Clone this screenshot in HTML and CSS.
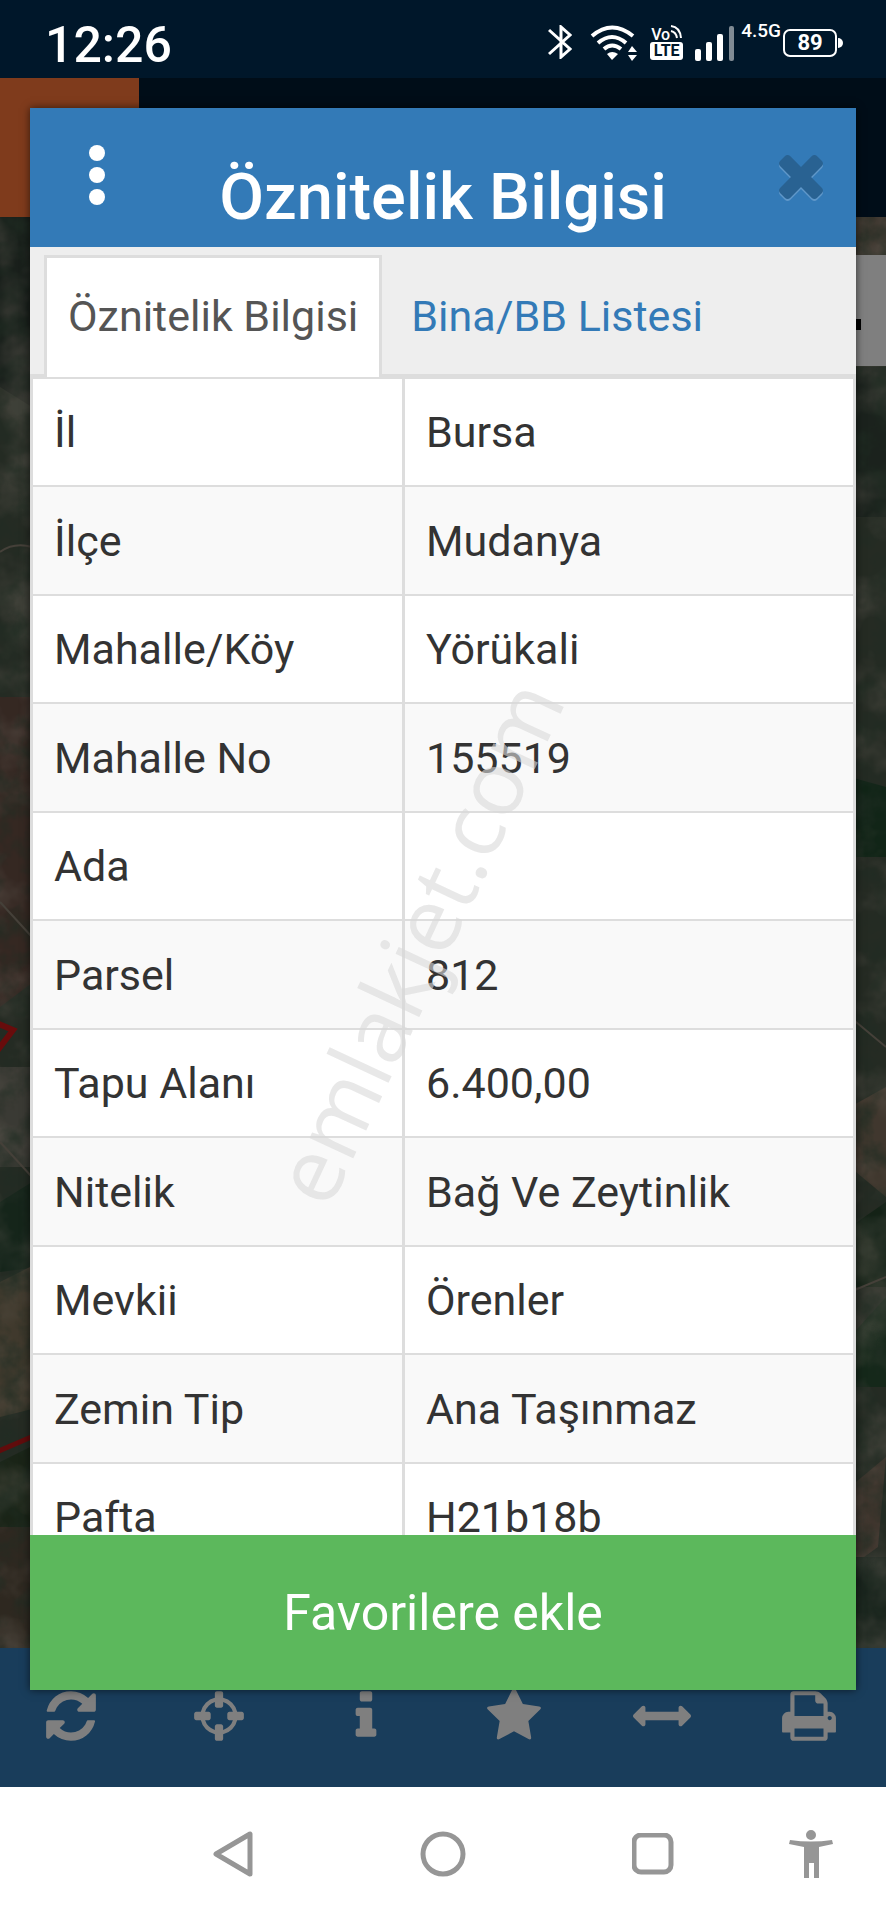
FILE: index.html
```
<!DOCTYPE html>
<html lang="tr">
  <head>
    <meta charset="UTF-8" />
    <meta name="viewport" content="width=device-width, initial-scale=1.0" />
    <title>Öznitelik Bilgisi</title>
    <link rel="stylesheet" href="styles.css">
  </head>
  <body>
    <div class="status-bar">
      <span class="clock">12:26</span>
      <div class="status-icons">
        <svg class="bluetooth" width="24" height="34" viewBox="0 0 24 34" fill="none" stroke="#fff" stroke-width="3">
          <path d="M1 5 L22 24 L13 32 V2 L22 10 L1 29" />
        </svg>
        <svg class="wifi" width="48" height="36" viewBox="0 0 48 36" fill="none" stroke="#fff" stroke-width="4">
          <path d="M2 11 Q22 -6 43 11" />
          <path d="M8 18 Q22 6 36 18" />
          <path d="M14 24 Q22 17 31 24" />
          <path d="M17 29 Q22 25 28 29 L22 35 Z" fill="#fff" stroke="none" />
          <path d="M38 27 L42 21 L47 27 Z M38 30 L42 36 L47 30 Z" fill="#fff" stroke="none" />
        </svg>
        <div class="volte">
          <span class="vo">Vo<svg width="12" height="15" viewBox="0 0 12 15" fill="none" stroke="#fff" stroke-width="2"><path d="M1 1 Q10 2 11 13 M1 6 Q6 7 7 13" /></svg></span>
          <span class="lte">LTE</span>
        </div>
        <svg class="signal" width="40" height="36" viewBox="0 0 40 36" fill="#fff">
          <rect x="0" y="24" width="6" height="12" rx="2" />
          <rect x="11" y="17" width="6" height="19" rx="2" />
          <rect x="22" y="9" width="6" height="27" rx="2" />
          <rect x="34" y="1" width="5" height="35" rx="2" fill="#808b94" />
        </svg>
        <span class="network">4.5G</span>
        <span class="battery">89</span>
      </div>
    </div>

    <div class="app">
      <header class="app-header">
        <div class="app-logo"></div>
      </header>

      <div class="map">
        <svg class="map-image" viewBox="0 0 886 1431" preserveAspectRatio="xMidYMid slice">
          <defs>
            <filter id="ground" x="0" y="0" width="100%" height="100%">
              <feTurbulence type="fractalNoise" baseFrequency="0.04" numOctaves="4" seed="8" />
              <feColorMatrix values="0 0 0 0 0.05  0 0 0 0 0.1  0 0 0 0 0.06  2.2 0 0 0 -0.9" />
            </filter>
            <filter id="soil" x="0" y="0" width="100%" height="100%">
              <feTurbulence type="fractalNoise" baseFrequency="0.02" numOctaves="4" seed="3" />
              <feColorMatrix values="0 0 0 0 0.6  0 0 0 0 0.52  0 0 0 0 0.42  0 2.6 0 0 -1.1" />
            </filter>
          </defs>
          <rect width="886" height="1431" fill="#4a5647" />
          <path d="M0 0 H32 V190 L0 170 Z" fill="#323f36" />
          <path d="M0 480 H40 V760 L0 790 Z" fill="#6a5045" />
          <path d="M0 850 H30 V950 H0 Z" fill="#757468" />
          <path d="M0 985 L40 960 V1050 L0 1055 Z" fill="#2b4a35" />
          <path d="M0 1065 L40 1045 V1190 L0 1200 Z" fill="#80735a" />
          <path d="M0 1245 L40 1225 V1310 H0 Z" fill="#34492f" />
          <path d="M0 1310 H40 V1431 H0 Z" fill="#5c5040" />
          <path d="M850 0 H886 V60 H850 Z" fill="#6f6152" />
          <path d="M850 150 H886 V300 H850 Z" fill="#36453a" />
          <path d="M850 560 L886 570 V640 H850 Z" fill="#234a2f" />
          <path d="M850 890 L886 870 V980 L850 950 Z" fill="#806f5c" />
          <path d="M850 1010 L886 985 V1070 H850 Z" fill="#28452d" />
          <path d="M850 1120 L886 1080 V1170 H850 Z" fill="#2a5034" />
          <path d="M850 1270 L886 1240 L878 1330 L850 1350 Z" fill="#7d6a5a" />
          <path d="M850 1340 H886 V1431 H850 Z" fill="#33493a" />
          <rect width="886" height="1431" filter="url(#soil)" opacity="0.4" />
          <rect width="886" height="1431" filter="url(#ground)" opacity="0.7" />
          <path d="M0 335 Q14 325 32 330 M0 685 L32 720 M0 925 L32 960 M850 800 L886 830 M850 1075 L886 1060" fill="none" stroke="#8a8172" stroke-width="2" />
          <path d="M-6 805 L13 813 L-6 838" fill="none" stroke="#d01818" stroke-width="6" />
          <path d="M-6 1236 L36 1218" fill="none" stroke="#c01818" stroke-width="5" />
        </svg>
        <div class="map-control"><span class="map-control-mark"></span></div>
      </div>

      <nav class="toolbar">
        <button type="button" aria-label="Yenile">
          <svg viewBox="0 0 1792 1792"><path d="M1639 1056q0 5-1 7-64 268-268 434.500t-478 166.500q-146 0-282.500-55t-243.500-157l-129 129q-19 19-45 19t-45-19-19-45v-448q0-26 19-45t45-19h448q26 0 45 19t19 45-19 45l-137 137q71 66 161 102t187 36q134 0 250-65t186-179q11-17 53-117 8-23 30-23h192q13 0 22.500 9.500t9.500 22.500zm25-800v448q0 26-19 45t-45 19h-448q-26 0-45-19t-19-45 19-45l138-138q-148-137-349-137-134 0-250 65t-186 179q-11 17-53 117-8 23-30 23h-199q-13 0-22.500-9.500t-9.500-22.500v-7q65-268 270-434.500t480-166.500q146 0 284 55.500t245 156.500l130-129q19-19 45-19t45 19 19 45z" /></svg>
        </button>
        <button type="button" aria-label="Konum">
          <svg viewBox="0 0 1792 1792"><path d="M1325 1024h-109q-26 0-45-19t-19-45v-128q0-26 19-45t45-19h109q-32-108-112.500-188.500t-188.500-112.500v109q0 26-19 45t-45 19h-128q-26 0-45-19t-19-45v-109q-108 32-188.500 112.500t-112.500 188.500h109q26 0 45 19t19 45v128q0 26-19 45t-45 19h-109q32 108 112.500 188.500t188.500 112.500v-109q0-26 19-45t45-19h128q26 0 45 19t19 45v109q108-32 188.500-112.500t112.500-188.500zm339-192v128q0 26-19 45t-45 19h-143q-37 161-154.500 278.500t-278.500 154.500v143q0 26-19 45t-45 19h-128q-26 0-45-19t-19-45v-143q-161-37-278.500-154.500t-154.500-278.500h-143q-26 0-45-19t-19-45v-128q0-26 19-45t45-19h143q37-161 154.500-278.500t278.500-154.500v-143q0-26 19-45t45-19h128q26 0 45 19t19 45v143q161 37 278.500 154.500t154.500 278.500h143q26 0 45 19t19 45z" /></svg>
        </button>
        <button type="button" aria-label="Bilgi">
          <svg viewBox="0 0 1792 1792"><path d="M1216 1344v128q0 26-19 45t-45 19h-512q-26 0-45-19t-19-45v-128q0-26 19-45t45-19h64v-384h-64q-26 0-45-19t-19-45v-128q0-26 19-45t45-19h384q26 0 45 19t19 45v576h64q26 0 45 19t19 45zm-128-1152v192q0 26-19 45t-45 19h-256q-26 0-45-19t-19-45v-192q0-26 19-45t45-19h256q26 0 45 19t19 45z" /></svg>
        </button>
        <button type="button" aria-label="Favoriler">
          <svg viewBox="0 0 1792 1792"><path d="M1728 647q0 22-26 48l-363 354 86 500q1 7 1 20 0 21-10.500 35.500t-30.500 14.500q-19 0-40-12l-449-236-449 236q-22 12-40 12-21 0-31.500-14.500t-10.500-35.500q0-6 2-20l86-500-364-354q-25-27-25-48 0-37 56-46l502-73 225-455q19-41 49-41t49 41l225 455 502 73q56 9 56 46z" /></svg>
        </button>
        <button type="button" aria-label="Ölçüm">
          <svg viewBox="0 0 1792 1792"><path d="M1792 896q0 26-19 45l-256 256q-19 19-45 19t-45-19-19-45v-128h-1024v128q0 26-19 45t-45 19-45-19l-256-256q-19-19-19-45t19-45l256-256q19-19 45-19t45 19 19 45v128h1024v-128q0-26 19-45t45-19 45 19l256 256q19 19 19 45z" /></svg>
        </button>
        <button type="button" aria-label="Yazdır">
          <svg viewBox="0 0 1792 1792"><path d="M448 1536h896v-256h-896v256zm0-640h896v-384h-160q-40 0-68-28t-28-68v-160h-640v640zm1152 64q0-26-19-45t-45-19-45 19-19 45 19 45 45 19 45-19 19-45zm128 0v416q0 13-9.500 22.500t-22.500 9.500h-224v160q0 40-28 68t-68 28h-960q-40 0-68-28t-28-68v-160h-224q-13 0-22.500-9.500t-9.500-22.500v-416q0-79 56.500-135.500t135.500-56.500h64v-544q0-40 28-68t68-28h672q40 0 88 20t76 48l152 152q28 28 48 76t20 88v256h64q79 0 135.500 56.500t56.500 135.500z" /></svg>
        </button>
      </nav>

      <div class="backdrop"></div>

      <section class="modal">
        <div class="modal-header">
          <button type="button" class="menu-btn" aria-label="Menü">
            <svg width="16" height="60" viewBox="0 0 16 60" fill="#fff">
              <circle cx="8" cy="8" r="8" />
              <circle cx="8" cy="30" r="8" />
              <circle cx="8" cy="52" r="8" />
            </svg>
          </button>
          <h1>Öznitelik Bilgisi</h1>
          <button type="button" class="close-btn" aria-label="Kapat">
            <svg width="44" height="46" viewBox="302 366 1188 1242">
              <path fill="#5f97c9" transform="translate(0 54)" d="M1490 1322q0 40-28 68l-136 136q-28 28-68 28t-68-28l-294-294-294 294q-28 28-68 28t-68-28l-136-136q-28-28-28-68t28-68l294-294-294-294q-28-28-28-68t28-68l136-136q28-28 68-28t68 28l294 294 294-294q28-28 68-28t68 28l136 136q28 28 28 68t-28 68l-294 294 294 294q28 28 28 68z" />
              <path fill="#296292" d="M1490 1322q0 40-28 68l-136 136q-28 28-68 28t-68-28l-294-294-294 294q-28 28-68 28t-68-28l-136-136q-28-28-28-68t28-68l294-294-294-294q-28-28-28-68t28-68l136-136q28-28 68-28t68 28l294 294 294-294q28-28 68-28t68 28l136 136q28 28 28 68t-28 68l-294 294 294 294q28 28 28 68z" />
            </svg>
          </button>
        </div>

        <div class="tabs">
          <a href="#oznitelik" class="tab active">Öznitelik Bilgisi</a>
          <a href="#bina" class="tab">Bina/BB Listesi</a>
        </div>

        <div class="modal-body" id="oznitelik">
          <table>
            <tbody>
              <tr><th scope="row">İl</th><td>Bursa</td></tr>
              <tr><th scope="row">İlçe</th><td>Mudanya</td></tr>
              <tr><th scope="row">Mahalle/Köy</th><td>Yörükali</td></tr>
              <tr><th scope="row">Mahalle No</th><td>155519</td></tr>
              <tr><th scope="row">Ada</th><td></td></tr>
              <tr><th scope="row">Parsel</th><td>812</td></tr>
              <tr><th scope="row">Tapu Alanı</th><td>6.400,00</td></tr>
              <tr><th scope="row">Nitelik</th><td>Bağ Ve Zeytinlik</td></tr>
              <tr><th scope="row">Mevkii</th><td>Örenler</td></tr>
              <tr><th scope="row">Zemin Tip</th><td>Ana Taşınmaz</td></tr>
              <tr><th scope="row">Pafta</th><td>H21b18b</td></tr>
            </tbody>
          </table>
        </div>

        <button type="button" class="favorite-btn">Favorilere ekle</button>
      </section>
    </div>

    <nav class="phone-nav">
      <button type="button" class="back" aria-label="Geri">
        <svg width="40" height="46" viewBox="0 0 40 46"><path d="M37 3 V43 L3 23 Z" stroke-linejoin="round" /></svg>
      </button>
      <button type="button" aria-label="Ana ekran">
        <svg width="46" height="46" viewBox="0 0 46 46"><circle cx="23" cy="23" r="20" /></svg>
      </button>
      <button type="button" aria-label="Son uygulamalar">
        <svg width="42" height="42" viewBox="0 0 42 42"><rect x="2" y="2" width="37" height="37" rx="7" /></svg>
      </button>
      <button type="button" class="access" aria-label="Erişilebilirlik">
        <svg width="44" height="48" viewBox="0 0 44 48">
          <path class="solid" d="M22 0 a5 5 0 0 1 0 10 a5 5 0 0 1 0 -10 Z M1 10 Q22 13 43 10 L44 14 L30 17 V48 H25 V33 H20 V48 H15 V17 L0 14 Z" />
        </svg>
      </button>
    </nav>

    <div class="watermark">emlakjet.com</div>
  </body>
</html>
```
FILE: styles.css
```
* {
  box-sizing: border-box;
}

body {
  margin: 0;
  height: 100vh;
  display: flex;
  flex-direction: column;
  position: relative;
  overflow: hidden;
  font-family: Roboto, "Liberation Sans", sans-serif;
  font-size: 43px;
  line-height: 60px;
  color: #333;
}

button {
  border: 0;
  padding: 0;
  background: none;
  font-family: inherit;
  cursor: pointer;
}

svg {
  display: block;
}

/* phone status bar */
.status-bar {
  height: 78px;
  padding: 10px 42px 0 45px;
  display: flex;
  justify-content: space-between;
  background-color: #00172a;
  color: white;
}

.clock {
  font-size: 50px;
  font-weight: 500;
  line-height: 70px;
}

.status-icons {
  display: flex;
  align-items: flex-start;
  padding-top: 15px;
}

.bluetooth {
  margin-right: 18px;
}

.wifi {
  margin-right: 12px;
}

.volte {
  width: 33px;
  margin-right: 12px;
  font-weight: 700;
  font-size: 16px;
  text-align: center;
}

.vo {
  display: flex;
  justify-content: center;
  font-weight: 500;
  height: 17px;
  line-height: 20px;
}

.lte {
  display: block;
  height: 18px;
  line-height: 18px;
  border-radius: 3px;
  background-color: white;
  color: #00172a;
}

.signal {
  margin-right: 6px;
}

.network {
  font-size: 19px;
  font-weight: 500;
  line-height: 12px;
  margin-right: 2px;
}

.battery {
  position: relative;
  width: 54px;
  height: 28px;
  margin: 4px 7px 0 0;
  border: 2px solid white;
  border-radius: 7px;
  font-size: 22px;
  font-weight: 700;
  line-height: 24px;
  text-align: center;
}

.battery::after {
  content: "";
  position: absolute;
  right: -8px;
  top: 7px;
  width: 5px;
  height: 10px;
  border-radius: 0 5px 5px 0;
  background-color: white;
}

/* map application */
.app {
  position: relative;
  flex: 1;
  min-height: 0;
  display: flex;
  flex-direction: column;
}

.app-header {
  height: 139px;
  background-color: #001a30;
}

.app-logo {
  width: 139px;
  height: 139px;
  background-color: #fe7638;
}

.map {
  position: relative;
  flex: 1;
  min-height: 0;
  overflow: hidden;
}

.map-image {
  width: 100%;
  height: 100%;
}

.map-control {
  position: absolute;
  top: 38px;
  right: 0;
  width: 111px;
  height: 111px;
  display: flex;
  align-items: center;
  justify-content: center;
  background-color: white;
}

.map-control-mark {
  width: 60px;
  height: 11px;
  margin-top: 28px;
  background-color: black;
}

.toolbar {
  height: 139px;
  display: flex;
  background-color: #337ab7;
}

.toolbar button {
  flex: 1;
  display: flex;
  align-items: center;
  justify-content: center;
  padding: 0 6px 4px 0;
}

.toolbar svg {
  width: 58px;
  height: 58px;
  fill: white;
}

.backdrop {
  position: absolute;
  inset: 0;
  background-color: rgba(0, 0, 0, 0.5);
}

/* attribute dialog */
.modal {
  position: absolute;
  inset: 30px 30px 97px;
  display: flex;
  flex-direction: column;
  background-color: white;
  box-shadow: 0 0 8px rgba(0, 0, 0, 0.6);
}

.modal-header {
  height: 139px;
  display: grid;
  grid-template-columns: 110px 1fr 110px;
  background-color: #337ab7;
  color: white;
}

.modal-header h1 {
  margin: 0;
  padding-top: 40px;
  font-size: 65px;
  font-weight: 500;
  line-height: 98px;
  text-align: center;
}

.menu-btn,
.close-btn {
  display: flex;
  align-items: center;
  justify-content: center;
}

.menu-btn {
  padding: 0 0 6px 24px;
}

.tabs {
  display: flex;
  gap: 5px;
  height: 130px;
  padding: 8px 14px 0;
  background-color: #eee;
  border-bottom: 3px solid #ddd;
}

.tab {
  height: 122px;
  padding: 28px 21px 0;
  border: 3px solid transparent;
  border-bottom: 0;
  color: #337ab7;
  text-decoration: none;
}

.tab.active {
  border-color: #ddd;
  background-color: white;
  color: #555;
}

.modal-body {
  flex: 1;
  min-height: 0;
  overflow: hidden;
}

table {
  width: 100%;
  table-layout: fixed;
  border-spacing: 0;
  border: solid #ddd;
  border-width: 0 3px;
}

th,
td {
  height: 108px;
  padding: 0 21px;
  border-top: 2px solid #ddd;
  font-weight: 400;
  text-align: left;
}

th {
  width: 45%;
}

td {
  border-left: 3px solid #ddd;
}

tr:nth-child(even) th,
tr:nth-child(even) td {
  height: 109px;
  background-color: #f9f9f9;
}

.favorite-btn {
  height: 155px;
  background-color: #5cb85c;
  color: white;
  font-size: 50px;
}

/* phone navigation keys */
.phone-nav {
  height: 133px;
  display: grid;
  grid-template-columns: 1fr 1fr 1fr 128px;
  padding-left: 128px;
  background-color: white;
}

.phone-nav button {
  display: flex;
  align-items: center;
  justify-content: center;
}

.phone-nav svg {
  fill: none;
  stroke: #969696;
  stroke-width: 5;
}

.phone-nav .solid {
  fill: #969696;
  stroke: none;
}

.phone-nav .access {
  padding-right: 22px;
}

.watermark {
  position: absolute;
  left: 47%;
  top: 49%;
  transform: translate(-50%, -50%) rotate(-65deg);
  font-family: "Open Sans", "Noto Sans", sans-serif;
  font-size: 90px;
  line-height: 116px;
  color: rgba(217, 217, 217, 0.6);
  pointer-events: none;
}
```
